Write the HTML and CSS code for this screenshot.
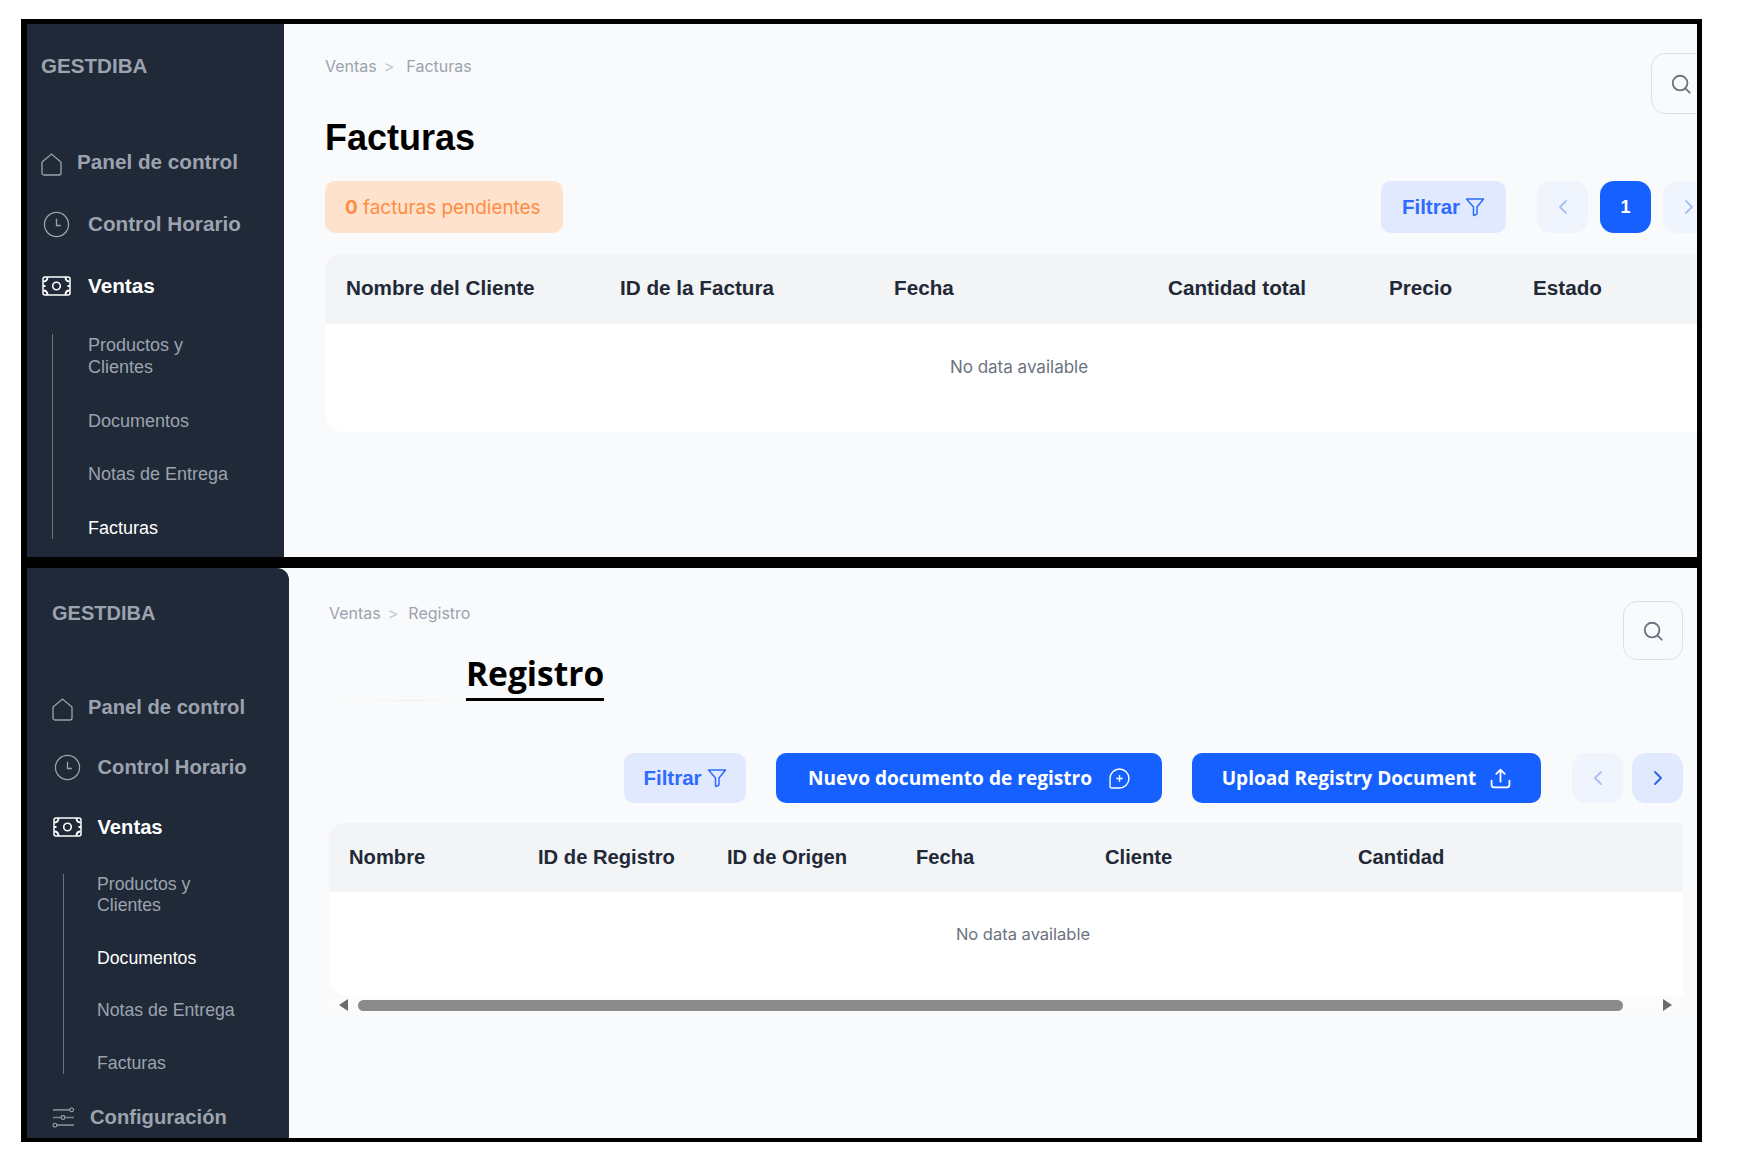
FILE: index.html
```html
<!DOCTYPE html>
<html lang="es">
<head>
    <meta charset="UTF-8">
    <meta name="viewport" content="width=device-width, initial-scale=1.0">
    <title>Facturas y Registro</title>
    <link rel="stylesheet" href="styles.css">
</head>
<body>
    <svg class="icon-defs" width="0" height="0">
        <defs>
            <symbol id="i-home" viewBox="0 0 21 24"><path d="M1 21V10.500a1 1 0 0 1 .4-.8L10.500 2l9.100 7.700a1 1 0 0 1 .4.8V21a2 2 0 0 1-2 2H3a2 2 0 0 1-2-2z" fill="none" stroke="currentColor" stroke-width="1.3"/></symbol>
            <symbol id="i-clock" viewBox="0 0 28 28"><circle cx="14" cy="14" r="12.500" fill="none" stroke="currentColor" stroke-width="1.3"/><path d="M14 8v7h4.500" fill="none" stroke="currentColor" stroke-width="1.4"/></symbol>
            <symbol id="i-money" viewBox="0 0 29 20"><rect x="1" y="1" width="27" height="18" rx="2" fill="none" stroke="currentColor" stroke-width="1.5"/><circle cx="14.500" cy="10" r="3.800" fill="none" stroke="currentColor" stroke-width="1.6"/><path d="M1.500 5.500c2.500 0 4-1.500 4-4.500M23.500 1c0 3 1.500 4.500 4 4.500M1.500 14.500c2.500 0 4 1.500 4 4.500M23.500 19c0-3 1.500-4.500 4-4.500M1 10h2.500M25.500 10H28" fill="none" stroke="currentColor" stroke-width="1.9"/></symbol>
            <symbol id="i-sliders" viewBox="0 0 24 22"><path d="M1 3h20M1 11h22M3 19h20" fill="none" stroke="currentColor" stroke-width="1.6" opacity=".75"/><circle cx="20.500" cy="3" r="2" fill="#1f2937" stroke="currentColor" stroke-width="1.2"/><circle cx="11.500" cy="11" r="2" fill="#1f2937" stroke="currentColor" stroke-width="1.2"/><circle cx="3" cy="19" r="2" fill="#1f2937" stroke="currentColor" stroke-width="1.2"/></symbol>
            <symbol id="i-filter" viewBox="0 0 20 20"><path d="M1.500 2h17l-6.500 8v6.500a1 1 0 0 1-.6.9l-2 .9a.6.6 0 0 1-.9-.5V10z" fill="none" stroke="currentColor" stroke-width="1.500" stroke-linejoin="round"/></symbol>
            <symbol id="i-search" viewBox="0 0 24 24"><circle cx="11" cy="11" r="8" fill="none" stroke="currentColor" stroke-width="2"/><path d="M17 17l4.500 4.500" fill="none" stroke="currentColor" stroke-width="2" stroke-linecap="round"/></symbol>
            <symbol id="i-left" viewBox="0 0 12 16"><path d="M9 2L3 8l6 6" fill="none" stroke="currentColor" stroke-width="1.8" stroke-linecap="round" stroke-linejoin="round"/></symbol>
            <symbol id="i-right" viewBox="0 0 12 16"><path d="M3 2l6 6-6 6" fill="none" stroke="currentColor" stroke-width="1.8" stroke-linecap="round" stroke-linejoin="round"/></symbol>
            <symbol id="i-plus" viewBox="0 0 20 20"><path d="M10 1a9 9 0 0 1 0 18H2.500A1.500 1.500 0 0 1 1 17.500V10a9 9 0 0 1 9-9z" fill="none" stroke="currentColor" stroke-width="1.3"/><path d="M10 7v6M7 10h6" fill="none" stroke="currentColor" stroke-width="1.3"/></symbol>
            <symbol id="i-upload" viewBox="0 0 20 20"><path d="M10 13V2M6 5.500L10 1.500l4 4M1.500 12v4a2.500 2.500 0 0 0 2.500 2.500h12a2.500 2.500 0 0 0 2.500-2.500v-4" fill="none" stroke="currentColor" stroke-width="1.7" stroke-linecap="round" stroke-linejoin="round"/></symbol>
        </defs>
    </svg>

    <div class="frame">
        <!-- Facturas -->
        <section class="screen screen-facturas">
            <aside class="sidebar">
                <div class="logo">GESTDIBA</div>
                <nav class="nav">
                    <a class="nav-item"><svg class="icon-home"><use href="#i-home"/></svg>Panel de control</a>
                    <a class="nav-item"><svg class="icon-clock"><use href="#i-clock"/></svg>Control Horario</a>
                    <a class="nav-item active"><svg class="icon-money"><use href="#i-money"/></svg>Ventas</a>
                </nav>
                <ul class="sub-nav">
                    <li>Productos y<br>Clientes</li>
                    <li>Documentos</li>
                    <li>Notas de Entrega</li>
                    <li class="active">Facturas</li>
                </ul>
            </aside>
            <main class="content">
                <div class="top-row">
                    <div class="breadcrumb"><span>Ventas</span><span class="sep">&gt;</span><span>Facturas</span></div>
                    <button class="search-btn"><svg><use href="#i-search"/></svg></button>
                </div>
                <h1 class="title">Facturas</h1>
                <div class="toolbar">
                    <div class="pending"><b>0</b> facturas pendientes</div>
                    <button class="btn-filter">Filtrar <svg><use href="#i-filter"/></svg></button>
                    <div class="pager">
                        <button class="page-btn"><svg><use href="#i-left"/></svg></button>
                        <button class="page-btn current">1</button>
                        <button class="page-btn"><svg><use href="#i-right"/></svg></button>
                    </div>
                </div>
                <div class="table">
                    <div class="table-head">
                        <span>Nombre del Cliente</span>
                        <span>ID de la Factura</span>
                        <span>Fecha</span>
                        <span>Cantidad total</span>
                        <span>Precio</span>
                        <span>Estado</span>
                    </div>
                    <div class="table-empty">No data available</div>
                </div>
            </main>
        </section>

        <!-- Registro -->
        <section class="screen screen-registro">
            <aside class="sidebar">
                <div class="logo">GESTDIBA</div>
                <nav class="nav">
                    <a class="nav-item"><svg class="icon-home"><use href="#i-home"/></svg>Panel de control</a>
                    <a class="nav-item"><svg class="icon-clock"><use href="#i-clock"/></svg>Control Horario</a>
                    <a class="nav-item active"><svg class="icon-money"><use href="#i-money"/></svg>Ventas</a>
                </nav>
                <ul class="sub-nav">
                    <li>Productos y<br>Clientes</li>
                    <li class="active">Documentos</li>
                    <li>Notas de Entrega</li>
                    <li>Facturas</li>
                </ul>
                <a class="nav-item config"><svg class="icon-sliders"><use href="#i-sliders"/></svg>Configuración</a>
            </aside>
            <main class="content">
                <div class="top-row">
                    <div class="breadcrumb"><span>Ventas</span><span class="sep">&gt;</span><span>Registro</span></div>
                    <button class="search-btn"><svg><use href="#i-search"/></svg></button>
                </div>
                <div class="tabs"><h1 class="tab-title">Registro</h1></div>
                <div class="toolbar">
                    <button class="btn-filter">Filtrar <svg><use href="#i-filter"/></svg></button>
                    <button class="btn-primary btn-new">Nuevo documento de registro <svg><use href="#i-plus"/></svg></button>
                    <button class="btn-primary btn-upload">Upload Registry Document <svg><use href="#i-upload"/></svg></button>
                    <div class="pager">
                        <button class="page-btn"><svg><use href="#i-left"/></svg></button>
                        <button class="page-btn enabled"><svg><use href="#i-right"/></svg></button>
                    </div>
                </div>
                <div class="table">
                    <div class="table-head">
                        <span>Nombre</span>
                        <span>ID de Registro</span>
                        <span>ID de Origen</span>
                        <span>Fecha</span>
                        <span>Cliente</span>
                        <span>Cantidad</span>
                    </div>
                    <div class="table-empty">No data available</div>
                </div>
                <div class="scrollbar">
                    <span class="arrow arrow-left"></span>
                    <span class="thumb"></span>
                    <span class="arrow arrow-right"></span>
                </div>
            </main>
        </section>
    </div>
</body>
</html>
```

FILE: styles.css
```css
/* Reset */
body, h1, ul {
    margin: 0;
    padding: 0;
}

body {
    background-color: #fff;
    font-family: "Liberation Sans", Arial, sans-serif;
}

button {
    border: none;
    padding: 0;
    font-family: inherit;
}

.icon-defs {
    position: absolute;
}

.frame {
    width: 1670px;
    margin: 19px 0 0 21px;
    padding: 5px 5px 4px 6px;
    background-color: #000;
    display: flex;
    flex-direction: column;
    gap: 11px;
}

.screen {
    display: flex;
    background-color: #f9fafb;
    overflow: hidden;
}

.screen-facturas {
    height: 533px;
}

.screen-registro {
    height: 570px;
}

/* Sidebar */
.sidebar {
    flex-shrink: 0;
    display: flex;
    flex-direction: column;
    background-color: #1f2937;
    color: #9ca3af;
}

.screen-facturas .sidebar {
    width: 257px;
    padding: 30px 0 0 14px;
    box-sizing: border-box;
}

.screen-registro .sidebar {
    width: 262px;
    padding: 33px 0 0 25px;
    box-sizing: border-box;
    border-top-right-radius: 12px;
}

.logo {
    font-size: 20px;
    line-height: 24px;
    font-weight: bold;
}

.screen-facturas .logo {
    font-size: 20.600px;
    margin-bottom: 53px;
}

.screen-registro .logo {
    margin-bottom: 52px;
}

.nav {
    display: flex;
    flex-direction: column;
}

.nav-item {
    display: flex;
    align-items: center;
    font-weight: bold;
    font-size: 20.700px;
    height: 62px;
}

.screen-registro .nav-item {
    font-size: 20.200px;
    height: 60px;
}

.nav-item.active {
    color: #fff;
}

.nav-item svg {
    flex-shrink: 0;
}

.icon-home {
    width: 21px;
    height: 24px;
    margin: 4px 15px 0 0;
}

.icon-clock {
    width: 27px;
    height: 27px;
    margin: 0 18px 0 2px;
}

.screen-registro .icon-clock {
    margin-right: 16.500px;
}

.icon-money {
    width: 29px;
    height: 20px;
    margin: 0 17px 0 1px;
}

.screen-registro .icon-money {
    margin-right: 15.500px;
}

.icon-sliders {
    width: 23px;
    height: 21px;
    margin-right: 15px;
}

.sub-nav {
    list-style: none;
    display: flex;
    flex-direction: column;
    font-size: 18px;
    line-height: 22px;
}

.screen-facturas .sub-nav {
    margin: 17px 0 0 11px;
    padding-left: 35px;
    width: 180px;
    gap: 31.500px;
    border-left: 1px solid #6b7280;
}

.screen-registro .sub-nav {
    margin: 17px 0 0 11px;
    padding-left: 33px;
    width: 180px;
    gap: 31.500px;
    font-size: 17.700px;
    line-height: 21px;
    border-left: 1px solid #6b7280;
}

.sub-nav .active {
    color: #fff;
}

.nav-item.config {
    margin-top: 22.500px;
}

/* Content */
.content {
    flex: 1;
    min-width: 0;
}

.screen-facturas .content {
    padding: 29px 0 0 41px;
}

.screen-registro .content {
    padding: 32px 14px 0 40px;
}

.top-row {
    display: flex;
    justify-content: space-between;
    align-items: flex-start;
}

.screen-facturas .top-row {
    margin-right: -14px;
    height: 63px;
}

.breadcrumb {
    display: flex;
    margin-top: 1px;
    font-family: Inter, sans-serif;
    font-size: 16px;
    line-height: 24px;
    color: #9ca3af;
}

.sep {
    margin: 0 11px 0 7px;
    color: #c4c9d1;
}

.screen-facturas .sep {
    margin-right: 12px;
}

.screen-registro .sep {
    margin-right: 10px;
}

.search-btn {
    width: 60px;
    height: 61px;
    background: transparent;
    border: 1.500px solid #dde0e5;
    border-radius: 14px;
    color: #6b7280;
    display: flex;
    align-items: center;
    justify-content: center;
}

.screen-registro .search-btn {
    height: 59px;
    margin-top: 1px;
}

.search-btn svg {
    width: 22px;
    height: 22px;
}

.title {
    font-size: 36px;
    line-height: 44px;
    color: #000;
}

.toolbar {
    display: flex;
    align-items: center;
}

.screen-facturas .toolbar {
    margin-top: 21px;
    height: 52px;
}

.screen-registro .toolbar {
    margin-top: 52px;
    height: 50px;
    justify-content: flex-end;
}

.pending {
    width: 238px;
    height: 52px;
    box-sizing: border-box;
    padding-left: 20px;
    display: flex;
    align-items: center;
    white-space: pre;
    background-color: #ffe2cc;
    border-radius: 10px;
    color: #ff8c42;
    font-family: Inter, sans-serif;
    font-size: 18.900px;
    margin-right: auto;
}

.btn-filter {
    display: flex;
    align-items: center;
    justify-content: center;
    gap: 5px;
    background-color: #e0e9fd;
    color: #2f6bff;
    font-weight: bold;
    font-size: 20.500px;
    border-radius: 10px;
    height: 100%;
}

.screen-facturas .btn-filter {
    width: 125px;
}

.screen-registro .btn-filter {
    width: 122px;
}

.btn-filter svg {
    width: 20px;
    height: 20px;
}

.btn-primary {
    display: flex;
    align-items: center;
    justify-content: center;
    background-color: #1660ff;
    color: #fff;
    font-family: "Open Sans", sans-serif;
    font-weight: 700;
    font-size: 19.100px;
    border-radius: 10px;
    height: 100%;
    margin-left: 30px;
    white-space: pre;
}

.btn-new {
    width: 386px;
}

.btn-new svg {
    width: 21px;
    height: 21px;
    margin-left: 12px;
}

.btn-upload {
    width: 349px;
}

.btn-upload svg {
    width: 21px;
    height: 21px;
    margin-left: 9px;
}

.pager {
    display: flex;
    height: 100%;
}

.screen-facturas .pager {
    gap: 12px;
    margin: 0 -17px 0 31px;
}

.screen-registro .pager {
    gap: 9px;
    margin-left: 31px;
}

.page-btn {
    width: 51px;
    height: 100%;
    border-radius: 14px;
    background-color: #eff4fd;
    color: #a9bff7;
    display: flex;
    align-items: center;
    justify-content: center;
    font-weight: bold;
    font-size: 18px;
}

.page-btn svg {
    width: 12px;
    height: 16px;
}

.page-btn.current {
    background-color: #1660ff;
    color: #fff;
}

.page-btn.enabled {
    background-color: #e0e9fd;
    color: #2563eb;
}

.tabs {
    margin-top: -12px;
    padding-left: 137px;
    background: linear-gradient(to right, #f9fafb 0, #f0f1ee 60%, #f9fafb 100%) no-repeat 0 100% / 137px 1px;
}

.tab-title {
    display: inline-block;
    vertical-align: bottom;
    font-family: "Open Sans", sans-serif;
    font-size: 33.500px;
    line-height: 50px;
    color: #000;
    border-bottom: 3px solid #000;
}

/* Table */
.table {
    background-color: #fff;
    overflow: hidden;
}

.screen-facturas .table {
    margin: 21px -16px 0 0;
    height: 178px;
    border-radius: 16px 0 0 20px;
}

.screen-registro .table {
    margin-top: 20px;
    height: 173px;
    border-radius: 16px 0 0 20px;
}

.table-head {
    display: grid;
    align-items: center;
    box-sizing: border-box;
    background-color: #f3f4f6;
    color: #1f2937;
    font-weight: bold;
    font-size: 20.700px;
    padding-left: 21px;
}

.screen-facturas .table-head {
    height: 70px;
    padding-bottom: 2px;
    grid-template-columns: 274px 274px 274px 221px 144px 1fr;
}

.screen-registro .table-head {
    height: 69px;
    padding-left: 20px;
    font-size: 20.200px;
    grid-template-columns: 189px 189px 189px 189px 253px 1fr;
}

.table-empty {
    text-align: center;
    font-family: Inter, sans-serif;
    color: #6b7280;
}

.screen-facturas .table-empty {
    padding-top: 33px;
    font-size: 17px;
}

.screen-registro .table-empty {
    padding: 32px 0 0 34px;
    font-size: 16.500px;
}

/* Scroll bar under the second table */
.scrollbar {
    display: flex;
    align-items: center;
    height: 16px;
    margin-top: 1px;
    padding: 0 9px 0 10px;
    background-color: #fbfbfb;
}

.thumb {
    width: 1265px;
    height: 11px;
    margin: 0 40px 0 10px;
    border-radius: 6px;
    background-color: #8b8b8b;
}

.arrow {
    width: 0;
    height: 0;
    border-top: 6px solid transparent;
    border-bottom: 6px solid transparent;
}

.arrow-left {
    border-right: 9px solid #6b6b6b;
}

.arrow-right {
    border-left: 9px solid #6b6b6b;
}
```
